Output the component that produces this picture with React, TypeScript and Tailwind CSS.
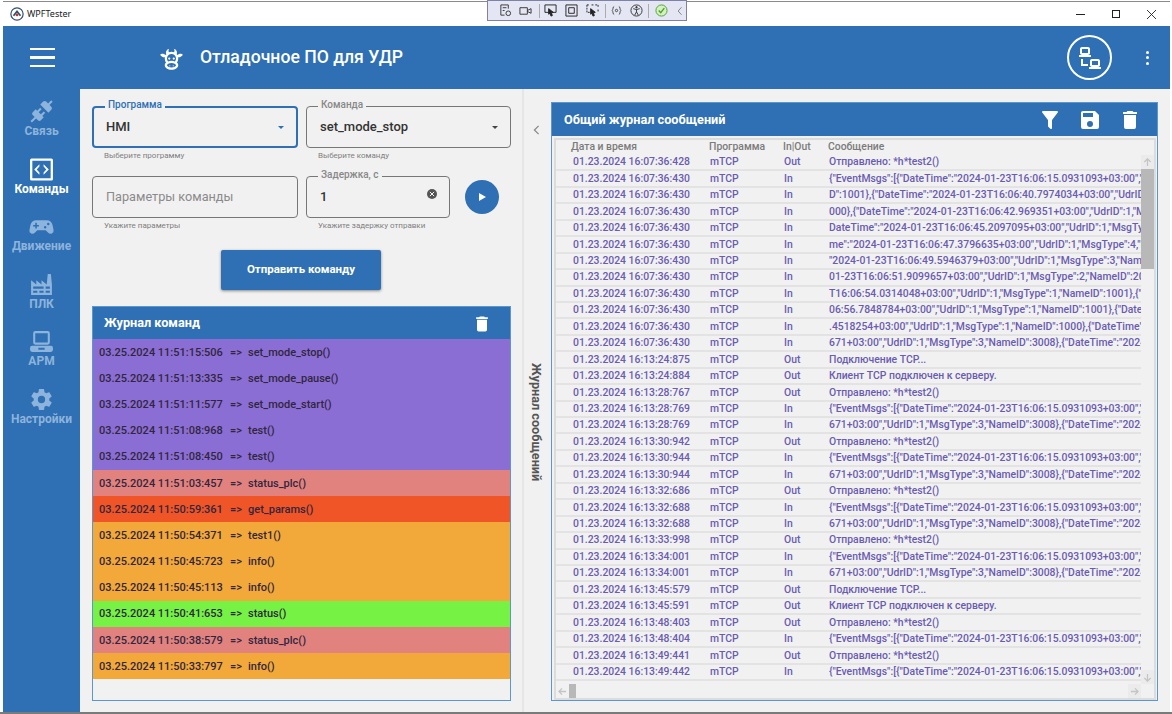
import type {ReactNode} from 'react'

const blue = 'bg-[#2f6fb3]'

const paths = {
	connection:
		'M21.4 7.5C22.2 8.3 22.2 9.6 21.4 10.3L18.6 13.1L10.8 5.3L13.6 2.5C14.4 1.7 15.7 1.7 16.5 2.5L18.3 4.3L21.3 1.3L22.7 2.7L19.7 5.7L21.4 7.5M15.6 13.3L14.2 11.9L11.4 14.7L9.3 12.6L12.1 9.8L10.7 8.4L7.9 11.2L6.4 9.8L3.6 12.6C2.8 13.4 2.8 14.7 3.6 15.4L5.4 17.2L1.4 21.2L2.8 22.6L6.8 18.6L8.6 20.4C9.4 21.2 10.7 21.2 11.4 20.4L14.2 17.6L12.8 16.2L15.6 13.3Z',
	code: 'M2.5 1.5H21.5A1.5 1.5 0 0 1 23 3V21A1.5 1.5 0 0 1 21.5 22.5H2.5A1.5 1.5 0 0 1 1 21V3A1.5 1.5 0 0 1 2.5 1.5M3.2 3.7V20.3H20.8V3.7H3.2M10 7V9.2L7.4 12L10 14.8V17L5 12L10 7M14 7L19 12L14 17V14.8L16.6 12L14 9.2V7Z',
	gamepad:
		'M7 6H17A6 6 0 0 1 22.6 10.5L23.6 15.5A3 3 0 0 1 18.4 18L16 15.5H8L5.6 18A3 3 0 0 1 0.4 15.5L1.4 10.5A6 6 0 0 1 7 6M6 8.5V10.5H4V12H6V14H7.5V12H9.5V10.5H7.5V8.5H6M15.5 11.5A1.2 1.2 0 1 0 15.5 13.9A1.2 1.2 0 1 0 15.5 11.5M18.5 8.5A1.2 1.2 0 1 0 18.5 10.9A1.2 1.2 0 1 0 18.5 8.5Z',
	factory:
		'M4,18V20H8V18H4M4,14V16H14V14H4M10,18V20H14V18H10M16,14V16H20V14H16M16,18V20H20V18H16M2,22V8L7,12V8L12,12V8L17,12L18,2H21L22,12V22H2Z',
	laptop:
		'M6 2H18A2 2 0 0 1 20 4V13A2 2 0 0 1 18 15H6A2 2 0 0 1 4 13V4A2 2 0 0 1 6 2M6 4V13H18V4H6M3 16H21A2 2 0 0 1 23 18V20A2 2 0 0 1 21 22H3A2 2 0 0 1 1 20V18A2 2 0 0 1 3 16M9 18V20H15V18H9Z',
	cog: 'M12,15.5A3.5,3.5 0 0,1 8.5,12A3.5,3.5 0 0,1 12,8.5A3.5,3.5 0 0,1 15.5,12A3.5,3.5 0 0,1 12,15.5M19.43,12.97C19.47,12.65 19.5,12.33 19.5,12C19.5,11.67 19.47,11.34 19.43,11L21.54,9.37C21.73,9.22 21.78,8.95 21.66,8.73L19.66,5.27C19.54,5.05 19.27,4.96 19.05,5.05L16.56,6.05C16.04,5.66 15.5,5.32 14.87,5.07L14.5,2.42C14.46,2.18 14.25,2 14,2H10C9.75,2 9.54,2.18 9.5,2.42L9.13,5.07C8.5,5.32 7.96,5.66 7.44,6.05L4.95,5.05C4.73,4.96 4.46,5.05 4.34,5.27L2.34,8.73C2.21,8.95 2.27,9.22 2.46,9.37L4.57,11C4.53,11.34 4.5,11.67 4.5,12C4.5,12.33 4.53,12.65 4.57,12.97L2.46,14.63C2.27,14.78 2.21,15.05 2.34,15.27L4.34,18.73C4.46,18.95 4.73,19.03 4.95,18.95L7.44,17.94C7.96,18.34 8.5,18.68 9.13,18.93L9.5,21.58C9.54,21.82 9.75,22 10,22H14C14.25,22 14.46,21.82 14.5,21.58L14.87,18.93C15.5,18.67 16.04,18.34 16.56,17.94L19.05,18.95C19.27,19.03 19.54,18.95 19.66,18.73L21.66,15.27C21.78,15.05 21.73,14.78 21.54,14.63L19.43,12.97Z',
	cow: 'M10.5 18A0.5 0.5 0 0 1 11 18.5A0.5 0.5 0 0 1 10.5 19A0.5 0.5 0 0 1 10 18.5A0.5 0.5 0 0 1 10.5 18M13.5 18A0.5 0.5 0 0 1 14 18.5A0.5 0.5 0 0 1 13.5 19A0.5 0.5 0 0 1 13 18.5A0.5 0.5 0 0 1 13.5 18M10 11A1 1 0 0 1 11 12A1 1 0 0 1 10 13A1 1 0 0 1 9 12A1 1 0 0 1 10 11M14 11A1 1 0 0 1 15 12A1 1 0 0 1 14 13A1 1 0 0 1 13 12A1 1 0 0 1 14 11M18 18C18 20.21 15.31 22 12 22C8.69 22 6 20.21 6 18C6 17.1 6.45 16.27 7.2 15.6C6.45 14.6 6 13.35 6 12L6.12 10.78C5.58 10.93 4.93 10.93 4.4 10.78C3.38 10.5 1.84 9.35 2.07 8.55C2.3 7.75 4.21 7.6 5.23 7.9C5.82 8.07 6.45 8.5 6.82 8.96L7.39 8.15C6.79 7.05 7 4 10 3L9.91 3.14C9.63 3.58 8.91 4.97 9.67 6.47C10.39 6.17 11.17 6 12 6C12.83 6 13.61 6.17 14.33 6.47C15.09 4.97 14.37 3.58 14.09 3.14L14 3C17 4 17.21 7.05 16.61 8.15L17.18 8.96C17.55 8.5 18.18 8.07 18.77 7.9C19.79 7.6 21.7 7.75 21.93 8.55C22.16 9.35 20.62 10.5 19.6 10.78C19.07 10.93 18.42 10.93 17.88 10.78L18 12C18 13.35 17.55 14.6 16.8 15.6C17.55 16.27 18 17.1 18 18M12 16C9.79 16 8 16.9 8 18C8 19.1 9.79 20 12 20C14.21 20 16 19.1 16 18C16 16.9 14.21 16 12 16M12 14C13.12 14 14.17 14.21 15.07 14.56C15.65 13.87 16 13 16 12A4 4 0 0 0 12 8A4 4 0 0 0 8 12C8 13 8.35 13.87 8.93 14.56C9.83 14.21 10.88 14 12 14Z',
	lan: 'M4,1C2.89,1 2,1.89 2,3V7C2,8.11 2.89,9 4,9H1V11H13V9H10C11.11,9 12,8.11 12,7V3C12,1.89 11.11,1 10,1H4M4,3H10V7H4V3M3,13V18L3,20H10V18H5V13H3M14,13C12.89,13 12,13.89 12,15V19C12,20.11 12.89,21 14,21H11V23H23V21H20C21.11,21 22,20.11 22,19V15C22,13.89 21.11,13 20,13H14M14,15H20V19H14V15Z',
	trash: 'M19,4H15.5L14.5,3H9.5L8.5,4H5V6H19M6,19A2,2 0 0,0 8,21H16A2,2 0 0,0 18,19V7H6V19Z',
	save: 'M15,9H5V5H15M12,19A3,3 0 0,1 9,16A3,3 0 0,1 12,13A3,3 0 0,1 15,16A3,3 0 0,1 12,19M17,3H5C3.89,3 3,3.9 3,5V19A2,2 0 0,0 5,21H19A2,2 0 0,0 21,19V7L17,3Z',
	filter: 'M14,12V19.88C14.04,20.18 13.94,20.5 13.71,20.71C13.32,21.1 12.69,21.1 12.3,20.71L10.29,18.7C10.06,18.47 9.96,18.16 10,17.87V12H9.97L4.21,4.62C3.87,4.19 3.95,3.56 4.38,3.22C4.57,3.08 4.78,3 5,3H19C19.22,3 19.43,3.08 19.62,3.22C20.05,3.56 20.13,4.19 19.79,4.62L14.03,12H14Z'
}

function Icon({d, className}: {d: string; className: string}) {
	return (
		<svg viewBox="0 0 24 24" fill="currentColor" className={className}>
			<path d={d} />
		</svg>
	)
}

function Arrow({d, className = ''}: {d: string; className?: string}) {
	return (
		<svg viewBox="0 0 10 10" className={`h-[9px] w-[9px] ${className}`} fill="none" stroke="#c4c4c4" strokeWidth="1.4">
			<path d={d} />
		</svg>
	)
}

const navItems = [
	{label: 'Связь', d: paths.connection, active: false},
	{label: 'Команды', d: paths.code, active: true},
	{label: 'Движение', d: paths.gamepad, active: false},
	{label: 'ПЛК', d: paths.factory, active: false},
	{label: 'АРМ', d: paths.laptop, active: false},
	{label: 'Настройки', d: paths.cog, active: false}
]

const purple = 'bg-[#8b6ed3]'
const pink = 'bg-[#e2827e]'
const orange = 'bg-[#f3a83a]'

const commands = [
	{t: '03.25.2024 11:51:15:506', c: 'set_mode_stop()', bg: purple},
	{t: '03.25.2024 11:51:13:335', c: 'set_mode_pause()', bg: purple},
	{t: '03.25.2024 11:51:11:577', c: 'set_mode_start()', bg: purple},
	{t: '03.25.2024 11:51:08:968', c: 'test()', bg: purple},
	{t: '03.25.2024 11:51:08:450', c: 'test()', bg: purple},
	{t: '03.25.2024 11:51:03:457', c: 'status_plc()', bg: pink},
	{t: '03.25.2024 11:50:59:361', c: 'get_params()', bg: 'bg-[#ef5527]'},
	{t: '03.25.2024 11:50:54:371', c: 'test1()', bg: orange},
	{t: '03.25.2024 11:50:45:723', c: 'info()', bg: orange},
	{t: '03.25.2024 11:50:45:113', c: 'info()', bg: orange},
	{t: '03.25.2024 11:50:41:653', c: 'status()', bg: 'bg-[#76f244]'},
	{t: '03.25.2024 11:50:38:579', c: 'status_plc()', bg: pink},
	{t: '03.25.2024 11:50:33:797', c: 'info()', bg: orange}
]

const sent = 'Отправлено: *h*test2()'
const ev = '{"EventMsgs":[{"DateTime":"2024-01-23T16:06:15.0931093+03:00","UdrID":1}'
const ev2 = '671+03:00","UdrID":1,"MsgType":3,"NameID":3008},{"DateTime":"2024-01-23T16'
const conn = 'Подключение TCP...'
const client = 'Клиент TCP подключен к серверу.'

const log: [string, string, string][] = [
	['16:07:36:428', 'Out', sent],
	['16:07:36:430', 'In', ev],
	['16:07:36:430', 'In', 'D":1001},{"DateTime":"2024-01-23T16:06:40.7974034+03:00","UdrID":1,"MsgType":1'],
	['16:07:36:430', 'In', '000},{"DateTime":"2024-01-23T16:06:42.969351+03:00","UdrID":1,"MsgType":1,"NameID"'],
	['16:07:36:430', 'In', 'DateTime":"2024-01-23T16:06:45.2097095+03:00","UdrID":1,"MsgType":1,"NameID"'],
	['16:07:36:430', 'In', 'me":"2024-01-23T16:06:47.3796635+03:00","UdrID":1,"MsgType":4,"NameID":1001'],
	['16:07:36:430', 'In', '"2024-01-23T16:06:49.5946379+03:00","UdrID":1,"MsgType":3,"NameID":3008}'],
	['16:07:36:430', 'In', '01-23T16:06:51.9099657+03:00","UdrID":1,"MsgType":2,"NameID":2001},{"Date'],
	['16:07:36:430', 'In', 'T16:06:54.0314048+03:00","UdrID":1,"MsgType":1,"NameID":1001},{"DateTime"'],
	['16:07:36:430', 'In', '06:56.7848784+03:00","UdrID":1,"MsgType":1,"NameID":1001},{"DateTime":"20'],
	['16:07:36:430', 'In', '.4518254+03:00","UdrID":1,"MsgType":1,"NameID":1000},{"DateTime":"2024-01'],
	['16:07:36:430', 'In', ev2],
	['16:13:24:875', 'Out', conn],
	['16:13:24:884', 'Out', client],
	['16:13:28:767', 'Out', sent],
	['16:13:28:769', 'In', ev],
	['16:13:28:769', 'In', ev2],
	['16:13:30:942', 'Out', sent],
	['16:13:30:944', 'In', ev],
	['16:13:30:944', 'In', ev2],
	['16:13:32:686', 'Out', sent],
	['16:13:32:688', 'In', ev],
	['16:13:32:688', 'In', ev2],
	['16:13:33:998', 'Out', sent],
	['16:13:34:001', 'In', ev],
	['16:13:34:001', 'In', ev2],
	['16:13:45:579', 'Out', conn],
	['16:13:45:591', 'Out', client],
	['16:13:48:403', 'Out', sent],
	['16:13:48:404', 'In', ev],
	['16:13:49:441', 'Out', sent],
	['16:13:49:442', 'In', ev]
]

function Field({
	label,
	hint,
	width,
	focused,
	children
}: {
	label?: string
	hint: string
	width: string
	focused?: boolean
	children: ReactNode
}) {
	return (
		<div className={width}>
			<div
				className={`relative flex h-[42px] items-center rounded-[4px] pr-[12px] text-[13px] font-medium text-[#333] ${
					focused ? 'border-2 border-[#2f6fb3] pl-[12px]' : 'border border-[#777] pl-[13px]'
				}`}>
				{label && (
					<span
						className={`absolute left-[11px] bg-[#f1f1f1] px-[3px] text-[10px] leading-[12px] ${
							focused ? 'top-[-9px] text-[#2f6fb3]' : 'top-[-8px] text-[#888]'
						}`}>
						{label}
					</span>
				)}
				{children}
			</div>
			<p className="mt-[3px] pl-[12px] text-[8px] leading-[10px] text-[#808080]">{hint}</p>
		</div>
	)
}

function Caret({color}: {color: string}) {
	return <span className={`ml-auto h-0 w-0 border-x-[3.5px] border-t-[3.5px] border-x-transparent ${color}`} />
}

function PanelHeader({title, inset, height, children}: {title: string; inset: string; height: string; children: ReactNode}) {
	return (
		<div className={`flex shrink-0 items-center ${height} ${blue} text-[12.7px] font-bold text-white`}>
			<span className={inset}>{title}</span>
			{children}
		</div>
	)
}

function TitleBar() {
	return (
		<div className="relative flex h-[25px] shrink-0 items-center border-t border-[#8a8a8a] bg-white pl-[7px] font-['Noto_Sans',sans-serif] text-[9px] text-[#222]">
			<svg viewBox="0 0 16 16" className="mr-[3px] h-[14px] w-[14px]">
				<circle cx="8" cy="8" r="7" fill="#fff" stroke="#33506f" strokeWidth="1.4" />
				<path d="M4 10 8 5 12 10" fill="none" stroke="#33506f" strokeWidth="2" />
				<circle cx="8" cy="9" r="1.6" fill="#c0392b" />
			</svg>
			WPFTester
			<div className="absolute left-[484px] top-[-2px] flex h-[21px] w-[200px] items-center border border-[#7d83a8] bg-[#e4e6f4] pl-[1px] text-[#333]">
				<span className="h-[15px] w-[6px] bg-[radial-gradient(#9a9a9a_0.6px,transparent_0.7px)] bg-[length:2px_2px]" />
				<svg viewBox="0 0 14 14" className="ml-[4px] h-[13px] w-[13px]" fill="none" stroke="#333" strokeWidth="1">
					<path d="M2 1h8v4M2 1v11h4M4 4h4M4 7h2" />
					<circle cx="10" cy="10" r="2.5" />
				</svg>
				<svg viewBox="0 0 14 14" className="ml-[7px] h-[13px] w-[13px]" fill="none" stroke="#333" strokeWidth="1">
					<path d="M1 4h8v7H1zM9 7l4-2v5l-4-2" />
				</svg>
				<span className="ml-[7px] h-[14px] w-px bg-[#aaa]" />
				<svg viewBox="0 0 14 14" className="ml-[4px] h-[13px] w-[13px]" fill="none" stroke="#222" strokeWidth="1">
					<path d="M1 1h12v8H9M5 9H1V1" />
					<path d="M5 5l5 4-2 .5 1 3-1.5.5-1-3-1.5 1z" fill="#222" />
				</svg>
				<svg viewBox="0 0 14 14" className="ml-[8px] h-[13px] w-[13px]" fill="none" stroke="#222" strokeWidth="1">
					<path d="M1 1h12v12H1zM4 4h6v6H4z" />
				</svg>
				<svg viewBox="0 0 14 14" className="ml-[8px] h-[13px] w-[13px]" fill="none" stroke="#222" strokeWidth="1">
					<path d="M1 1h3M6 1h2M10 1h3v3M13 6v3M1 1v8h3" strokeDasharray="2 1" />
					<path d="M5 5l5 4-2 .5 1 3-1.5.5-1-3-1.5 1z" fill="#222" />
				</svg>
				<span className="ml-[6px] h-[14px] w-px bg-[#aaa]" />
				<svg viewBox="0 0 14 14" className="ml-[5px] h-[11px] w-[11px]" fill="none" stroke="#444" strokeWidth="1.2">
					<path d="M4 2C2 2 3 6 1.5 7 3 8 2 12 4 12M10 2c2 0 1 4 2.5 5-1.5 1-.5 5-2.5 5" />
					<circle cx="7" cy="7" r="1.5" />
				</svg>
				<svg viewBox="0 0 14 14" className="ml-[8px] h-[13px] w-[13px]" fill="none" stroke="#333" strokeWidth="1">
					<circle cx="7" cy="7" r="6" />
					<path d="M3.5 5 7 6l3.5-1M7 6v2.5L5 12M7 8.5 9 12" />
					<circle cx="7" cy="3.5" r=".8" fill="#333" />
				</svg>
				<span className="ml-[5px] h-[14px] w-px bg-[#aaa]" />
				<svg viewBox="0 0 14 14" className="ml-[6px] h-[13px] w-[13px]" fill="#d6f0c4" stroke="#4aa329" strokeWidth="1">
					<circle cx="7" cy="7" r="6" />
					<path d="M4 7l2.2 2.4L10 4.5" fill="none" strokeWidth="1.5" />
				</svg>
				<svg viewBox="0 0 8 12" className="ml-[9px] h-[10px] w-[6px]" fill="none" stroke="#666" strokeWidth="1">
					<path d="M6 1 1.5 6 6 11" />
				</svg>
			</div>
			<div className="ml-auto flex items-center">
				<span className="h-px w-[9px] bg-[#222]" />
				<span className="ml-[27px] h-[8px] w-[8px] border border-[#222]" />
				<svg viewBox="0 0 10 10" className="ml-[27px] mr-[14px] h-[9px] w-[9px]" stroke="#222" strokeWidth="1">
					<path d="M0 0 10 10M10 0 0 10" />
				</svg>
			</div>
		</div>
	)
}

function Sidebar() {
	return (
		<aside className={`flex w-[77px] shrink-0 flex-col items-center pt-[10px] ${blue}`}>
			{navItems.map((item) => (
				<div
					key={item.label}
					className={`flex h-[57.6px] w-full flex-col items-center text-[12px] font-bold leading-[14px] ${
						item.active ? 'text-white' : 'text-[#8db4dc]'
					}`}>
					<Icon d={item.d} className="h-[25px] w-[25px]" />
					<span>{item.label}</span>
				</div>
			))}
		</aside>
	)
}

function LeftPanel() {
	return (
		<section className="flex w-[444px] shrink-0 flex-col border-r-2 border-[#e6e6e6] pb-[11px] pl-[12px] pr-[11px] pt-[17px]">
			<div className="flex gap-[8px]">
				<Field label="Программа" hint="Выберите программу" width="w-[206px]" focused>
					HMI
					<Caret color="border-t-[#2f6fb3]" />
				</Field>
				<Field label="Команда" hint="Выберите команду" width="w-[205px]">
					set_mode_stop
					<Caret color="border-t-[#444]" />
				</Field>
			</div>
			<div className="mt-[15px] flex gap-[8px]">
				<Field hint="Укажите параметры" width="w-[206px]">
					<span className="font-normal text-[12.7px] text-[#8a8a8a]">Параметры команды</span>
				</Field>
				<Field label="Задержка, с" hint="Укажите задержку отправки" width="w-[144px]">
					1
					<span className="ml-auto mb-[6px] flex h-[10px] w-[10px] items-center justify-center rounded-full bg-[#555]">
						<svg viewBox="0 0 10 10" className="h-[6px] w-[6px]" stroke="#fff" strokeWidth="1.6">
							<path d="M1.5 1.5 8.5 8.5M8.5 1.5 1.5 8.5" />
						</svg>
					</span>
				</Field>
				<button className={`ml-[7px] mt-[4px] flex h-[34px] w-[34px] items-center justify-center rounded-full ${blue}`}>
					<svg viewBox="0 0 10 10" className="h-[10px] w-[10px]" fill="#fff">
						<path d="M2 1 9 5 2 9Z" />
					</svg>
				</button>
			</div>
			<button
				className={`ml-[129px] mt-[19px] h-[40px] w-[160px] shrink-0 rounded-[2px] ${blue} text-[11.5px] font-bold text-white shadow-[0_1px_3px_rgba(0,0,0,0.45)]`}>
				Отправить команду
			</button>
			<div className="mt-[16px] flex min-h-0 flex-1 flex-col border border-[#5b97cf]">
				<PanelHeader title="Журнал команд" inset="pl-[11px]" height="h-[32px]">
					<Icon d={paths.trash} className="ml-auto mr-[18px] mt-[2px] h-[20px] w-[20px]" />
				</PanelHeader>
				<ul className="flex-1 bg-[#f1f1f1]">
					{commands.map((row) => (
						<li
							key={row.t}
							className={`flex h-[26.16px] items-center pl-[6px] pt-[2px] text-[11px] font-medium text-[#30263f] ${row.bg}`}>
							<span className="w-[131px]">{row.t}</span>
							<span className="w-[18px]">=&gt;</span>
							<span>{row.c}</span>
						</li>
					))}
				</ul>
			</div>
		</section>
	)
}

function Collapse() {
	return (
		<div className="flex w-[27px] shrink-0 flex-col items-center pr-[3px]">
			<svg viewBox="0 0 8 12" className="mt-[36px] h-[10px] w-[7px]" fill="none" stroke="#888" strokeWidth="1.5">
				<path d="M6.5 1 1.5 6 6.5 11" />
			</svg>
			<span className="mt-[228px] [writing-mode:vertical-rl] text-[12.7px] font-bold text-[#555]">
				Журнал сообщений
			</span>
		</div>
	)
}

function MessagesPanel() {
	return (
		<section className="mb-[11px] mt-[13px] flex w-[607px] shrink-0 flex-col border border-[#5b97cf]">
			<PanelHeader title="Общий журнал сообщений" inset="pl-[12px]" height="h-[33px]">
				<div className="ml-auto mr-[15px] flex items-center gap-[16px]">
					<Icon d={paths.filter} className="h-[24px] w-[24px]" />
					<Icon d={paths.save} className="h-[24px] w-[24px]" />
					<Icon d={paths.trash} className="h-[24px] w-[24px]" />
				</div>
			</PanelHeader>
			<div className="ml-[2px] mr-[1px] mt-[2px] flex min-h-0 flex-1 flex-col overflow-hidden border-2 border-[#dcdcdc] bg-[#f1f1f1]">
				<div className="flex h-[15px] shrink-0 items-center pb-[2px] text-[10.4px] font-medium text-[#7b7b7b]">
					<span className="w-[153px] pl-[15px]">Дата и время</span>
					<span className="w-[74px]">Программа</span>
					<span className="w-[45px]">In|Out</span>
					<span>Сообщение</span>
				</div>
				<div className="flex min-h-0 flex-1">
					<ul className="min-w-0 flex-1">
						{log.map(([time, dir, msg], i) => (
							<li
								key={i}
								className="flex h-[16.45px] items-center overflow-hidden whitespace-nowrap border-b-2 border-[#e3e3e3] text-[10.4px] font-medium text-[#6a5cb0]">
								<span className="w-[153px] shrink-0 pl-[17px]">01.23.2024 {time}</span>
								<span className="w-[74px] shrink-0 pl-[1px]">mTCP</span>
								<span className="w-[45px] shrink-0 pl-[1px]">{dir}</span>
								<span className="pl-[1px]">{msg}</span>
							</li>
						))}
					</ul>
					<div className="flex w-[13px] shrink-0 flex-col items-center bg-[#f1f1f1]">
						<div className="flex h-[14px] w-full items-center justify-center bg-[#ebebeb]">
							<Arrow d="M5 9V1M1.5 4.5 5 1l3.5 3.5" />
						</div>
						<div className="h-[100px] w-full bg-[#b8b8b8]" />
						<div className="flex-1" />
						<div className="flex h-[14px] w-full items-center justify-center bg-[#ebebeb]">
							<Arrow d="M5 1v8M1.5 5.5 5 9l3.5-3.5" />
						</div>
					</div>
				</div>
				<div className="mr-[13px] flex h-[14px] shrink-0 items-center bg-[#f1f1f1]">
					<span className="flex h-full w-[13px] items-center justify-center">
						<Arrow d="M9 5H1M4.5 1.5 1 5l3.5 3.5" />
					</span>
					<span className="h-full w-[7px] bg-[#b8b8b8]" />
					<span className="ml-auto flex h-full w-[13px] items-center justify-center bg-[#ebebeb]">
						<Arrow d="M1 5h8M5.5 1.5 9 5 5.5 8.5" />
					</span>
				</div>
			</div>
		</section>
	)
}

export default function App() {
	return (
		<div className="flex h-[714px] w-[1172px] flex-col overflow-hidden border-b-2 border-[#7a7a7a] bg-white pl-[3px] pr-[2px] pt-px font-['Roboto',sans-serif]">
			<TitleBar />
			<header className={`flex h-[63px] shrink-0 items-center text-white ${blue}`}>
				<div className="ml-[27px] flex w-[25px] flex-col gap-[6px]">
					<span className="h-[2.5px] bg-white" />
					<span className="h-[2.5px] bg-white" />
					<span className="h-[2.5px] bg-white" />
				</div>
				<Icon d={paths.cow} className="ml-[103px] mt-[2px] h-[27px] w-[27px]" />
				<h1 className="ml-[15px] text-[17.6px] font-medium">Отладочное ПО для УДР</h1>
				<div className="ml-auto mr-[34px] flex h-[45px] w-[45px] items-center justify-center rounded-full border-2 border-white">
					<Icon d={paths.lan} className="h-[24px] w-[24px]" />
				</div>
				<div className="mr-[21px] flex flex-col gap-[2.5px]">
					<span className="h-[3px] w-[3px] rounded-full bg-white" />
					<span className="h-[3px] w-[3px] rounded-full bg-white" />
					<span className="h-[3px] w-[3px] rounded-full bg-white" />
				</div>
			</header>
			<main className="flex min-h-0 flex-1">
				<Sidebar />
				<div className="flex min-w-0 flex-1 bg-[#f1f1f1]">
					<LeftPanel />
					<Collapse />
					<MessagesPanel />
				</div>
			</main>
		</div>
	)
}
